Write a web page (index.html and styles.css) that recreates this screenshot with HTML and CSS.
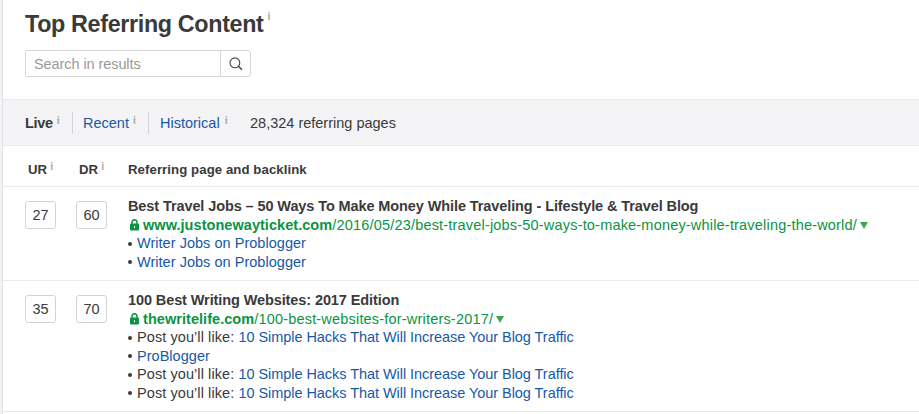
FILE: index.html
```html
<!DOCTYPE html>
<html lang="en">
<head>
  <meta charset="UTF-8">
  <meta name="viewport" content="width=device-width, initial-scale=1.0">
  <title>Top Referring Content</title>
  <link rel="stylesheet" href="styles.css">
</head>
<body>
  <main class="panel">
    <!-- Heading and search -->
    <header class="top">
      <h1 class="title">Top Referring Content<sup class="info">i</sup></h1>
      <form class="search">
        <input class="search-input" type="text" placeholder="Search in results">
        <button class="search-button" type="button" aria-label="Search">
          <svg width="14" height="14" viewBox="0 0 14 14" fill="none" stroke="#444" stroke-width="1.1">
            <circle cx="5.9" cy="5.8" r="4.9"/>
            <path d="M9.4 9.3L13 12.7" stroke-width="1.5"/>
          </svg>
        </button>
      </form>
    </header>

    <!-- Index tabs -->
    <nav class="tabs">
      <span class="tab tab-live"><b>Live</b><sup class="info">i</sup></span>
      <span class="tab tab-recent"><a>Recent</a><sup class="info">i</sup></span>
      <span class="tab tab-historical"><a>Historical</a><sup class="info">i</sup></span>
      <span class="total">28,324 referring pages</span>
    </nav>

    <!-- Table -->
    <section class="row head">
      <div class="th">UR<sup class="info">i</sup></div>
      <div class="th">DR<sup class="info">i</sup></div>
      <div class="th th-page">Referring page and backlink</div>
    </section>

    <section class="row">
      <div class="cell"><span class="rating">27</span></div>
      <div class="cell"><span class="rating">60</span></div>
      <div class="page">
        <h2 class="page-title">Best Travel Jobs – 50 Ways To Make Money While Traveling - Lifestyle &amp; Travel Blog</h2>
        <div class="url">
          <svg class="lock" width="9" height="12" viewBox="0 0 9 12">
            <path d="M2 5V3.2a2.5 2.5 0 0 1 5 0V5" fill="none" stroke="#0a9444" stroke-width="1.5"/>
            <rect y="4.6" width="9" height="7" rx="1" fill="#0a9444"/>
            <path d="M4.5 7v2.2" stroke="#fff" stroke-width="1"/>
          </svg>
          <b class="domain">www.justonewayticket.com</b><span class="path">/2016/05/23/best-travel-jobs-50-ways-to-make-money-while-traveling-the-world/</span>
          <i class="arrow"></i>
        </div>
        <ul class="links">
          <li><a>Writer Jobs on Problogger</a></li>
          <li><a>Writer Jobs on Problogger</a></li>
        </ul>
      </div>
    </section>

    <section class="row">
      <div class="cell"><span class="rating">35</span></div>
      <div class="cell"><span class="rating">70</span></div>
      <div class="page">
        <h2 class="page-title">100 Best Writing Websites: 2017 Edition</h2>
        <div class="url">
          <svg class="lock" width="9" height="12" viewBox="0 0 9 12">
            <path d="M2 5V3.2a2.5 2.5 0 0 1 5 0V5" fill="none" stroke="#0a9444" stroke-width="1.5"/>
            <rect y="4.6" width="9" height="7" rx="1" fill="#0a9444"/>
            <path d="M4.5 7v2.2" stroke="#fff" stroke-width="1"/>
          </svg>
          <b class="domain">thewritelife.com</b><span class="path">/100-best-websites-for-writers-2017/</span>
          <i class="arrow"></i>
        </div>
        <ul class="links">
          <li><span class="before">Post you’ll like: </span><a>10 Simple Hacks That Will Increase Your Blog Traffic</a></li>
          <li><a>ProBlogger</a></li>
          <li><span class="before">Post you’ll like: </span><a>10 Simple Hacks That Will Increase Your Blog Traffic</a></li>
          <li><span class="before">Post you’ll like: </span><a>10 Simple Hacks That Will Increase Your Blog Traffic</a></li>
        </ul>
      </div>
    </section>
  </main>
</body>
</html>
```

FILE: styles.css
```css
* {
  margin: 0;
  padding: 0;
  box-sizing: border-box;
}

body {
  height: 414px;
  padding-left: 2px;
  background: #f3f3f6;
  font-family: "Liberation Sans", Arial, sans-serif;
  font-size: 14.5px;
  color: #3a3a3a;
  overflow: hidden;
}

a {
  color: #1759a6;
}

/* Panel */
.panel {
  height: 414px;
  background: #fff;
  border-left: 1px solid #e2e2e6;
}

.info {
  align-self: flex-start;
  font-size: 10.5px;
  font-weight: bold;
  line-height: 10px;
  letter-spacing: 0;
  color: #aaa;
}

/* Heading and search */
.top {
  height: 99px;
  padding: 10px 0 0 22px;
}

.title {
  display: flex;
  height: 30px;
  font-size: 23.3px;
  line-height: 29px;
  letter-spacing: -0.33px;
}

.title .info {
  margin: 1px 0 0 4px;
}

.search {
  display: flex;
  width: 226px;
  height: 27px;
  margin-top: 10px;
  border: 1px solid #d6d6d6;
  border-radius: 2px 3px 3px 2px;
}

.search-input {
  width: 195px;
  padding-left: 8px;
  border: 0;
  border-right: 1px solid #d6d6d6;
  background: none;
  font: inherit;
  letter-spacing: -0.08px;
}

.search-input::placeholder {
  color: #999;
}

.search-button {
  display: flex;
  flex: 1;
  align-items: center;
  justify-content: center;
  border: 0;
  background: none;
}

/* Tabs */
.tabs {
  display: flex;
  align-items: center;
  height: 47px;
  padding-left: 22px;
  background: #f4f4f6;
  border-top: 1px solid #eaeaec;
  border-bottom: 1px solid #eaeaec;
}

.tab {
  display: flex;
  align-items: center;
  height: 22px;
  margin-right: 10px;
  border-right: 1px solid #d4d4d6;
}

.tab .info {
  margin: 3px 0 0 4px;
}

.tab-live {
  width: 48px;
}

.tab-live b {
  letter-spacing: -0.3px;
}

.tab-recent {
  width: 66px;
  margin-right: 11px;
}

.tab-historical {
  width: 80px;
  border-right: 0;
}

.tab-historical .info {
  margin-left: 5px;
}

/* Table */
.row {
  display: grid;
  grid-template-columns: 51px 52px 1fr;
  padding: 10px 0 9px 22px;
  border-bottom: 1px solid #e9e9eb;
}

.head {
  height: 41px;
  padding: 0 0 0 22px;
}

.th {
  display: flex;
  align-items: center;
  height: 47px;
  padding-left: 3px;
  font-size: 13.2px;
  font-weight: bold;
  letter-spacing: 0.08px;
}

.th-page {
  padding-left: 0;
}

.th .info {
  margin: 15px 0 0 3px;
}

.rating {
  display: block;
  width: 31px;
  height: 28px;
  margin-top: 4px;
  border: 1px solid #d3d3d3;
  border-radius: 3px;
  line-height: 26px;
  text-align: center;
}

.page {
  line-height: 18.5px;
  white-space: nowrap;
}

.page-title {
  font-size: 14.5px;
  letter-spacing: -0.1px;
}

.url {
  display: flex;
  align-items: center;
  color: #0a9444;
}

.lock {
  margin: 0 4px 0 2px;
}

.domain {
  letter-spacing: 0.05px;
}

.path {
  letter-spacing: 0.19px;
}

.arrow {
  margin: 1px 0 0 3px;
  border-top: 7px solid #3fa64b;
  border-left: 4.5px solid transparent;
  border-right: 4.5px solid transparent;
}

.links {
  list-style: none;
}

.links li {
  display: flex;
  align-items: center;
  white-space: pre;
  letter-spacing: 0.03px;
}

.links .before {
  letter-spacing: 0.08px;
}

.before + a {
  letter-spacing: -0.05px;
}

.links li::before {
  content: "";
  width: 4px;
  height: 4px;
  margin: 1px 5px 0 0;
  border-radius: 50%;
  background: #3a3a3a;
}
```
